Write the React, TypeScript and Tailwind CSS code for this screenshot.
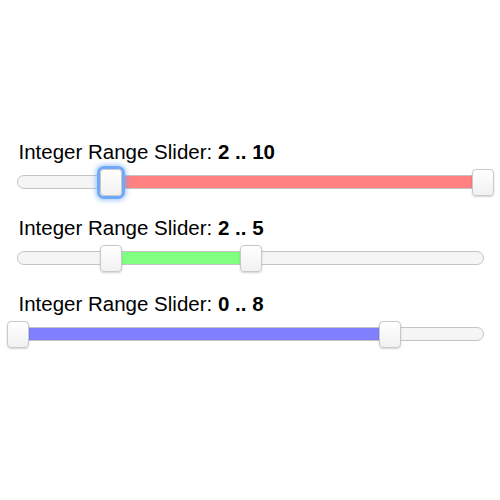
import React from "react";

const sliders = [
  { lo: 2, hi: 10, fill: "bg-[#ff8080]", focused: 0 },
  { lo: 2, hi: 5, fill: "bg-[#80ff80]", focused: -1 },
  { lo: 0, hi: 8, fill: "bg-[#8080ff]", focused: -1 },
];

const MAX = 10;

function Handle({ value, focused }: { value: number; focused: boolean }) {
  return (
    <div
      className={`absolute top-[-7px] h-[27px] w-[22px] rounded-[4px] border border-[#c9c9c9] bg-gradient-to-b from-white to-[#f1f1f1] ${
        focused
          ? "shadow-[0_0_0_3px_#6ea8f7,0_0_4px_5px_rgba(110,165,245,0.5)]"
          : "shadow-[0_1px_2px_rgba(0,0,0,0.18)]"
      }`}
      style={{ left: `calc(${(value / MAX) * 100}% - 11px)` }}
    />
  );
}

export default function App() {
  return (
    <div
      className="w-[500px] h-[500px] bg-white pt-[140px] pl-[17px] pr-[16px] flex flex-col gap-[27px] text-black"
      style={{ fontFamily: '"Liberation Sans", Arial, sans-serif' }}
    >
      {sliders.map((s, i) => (
        <div key={i} className="flex flex-col">
          <p className="text-[20.5px] leading-[24px] pl-[1.5px]">
            Integer Range Slider:{" "}
            <span className="font-bold">
              {s.lo} .. {s.hi}
            </span>
          </p>
          <div className="relative mt-[11px] h-[14px] rounded-full border border-[#c4c4c4] bg-[#f5f5f5]">
            <div
              className={`absolute top-0 bottom-0 ${s.fill}`}
              style={{
                left: `${(s.lo / MAX) * 100}%`,
                width: `${((s.hi - s.lo) / MAX) * 100}%`,
              }}
            />
            <Handle value={s.lo} focused={s.focused === 0} />
            <Handle value={s.hi} focused={false} />
          </div>
        </div>
      ))}
    </div>
  );
}
